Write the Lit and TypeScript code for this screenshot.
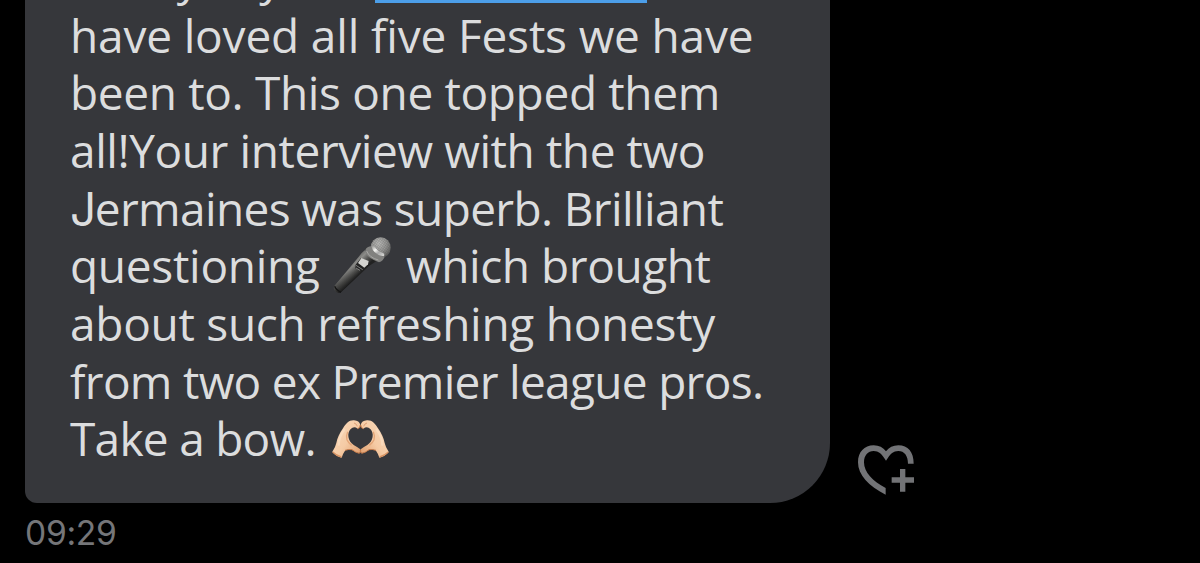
import { LitElement, html, css, svg } from 'lit';
import { customElement, property } from 'lit/decorators.js';

@customElement('mic-emoji')
export class MicEmoji extends LitElement {
  static styles = css`
    :host {
      display: inline-block;
      width: 59px;
      height: 58px;
      white-space: normal;
      line-height: 0;
    }

    svg {
      display: block;
      width: 100%;
      height: 100%;
    }
  `;

  render() {
    return html`
      <svg viewBox="40 36 177 174">
        <defs>
          <linearGradient id="body" gradientUnits="userSpaceOnUse" x1="82" y1="126" x2="112" y2="156">
            <stop offset="0" stop-color="#6a6a68" />
            <stop offset="0.3" stop-color="#8c8c89" />
            <stop offset="0.65" stop-color="#555553" />
            <stop offset="1" stop-color="#222" />
          </linearGradient>
          <linearGradient id="fade" gradientUnits="userSpaceOnUse" x1="130" y1="100" x2="50" y2="200">
            <stop offset="0.2" stop-color="#111" stop-opacity="0" />
            <stop offset="1" stop-color="#111" stop-opacity="0.45" />
          </linearGradient>
          <radialGradient id="ball" cx="0.4" cy="0.3" r="0.75">
            <stop offset="0" stop-color="#c4c4c2" />
            <stop offset="0.55" stop-color="#979795" />
            <stop offset="1" stop-color="#555554" />
          </radialGradient>
          <pattern id="mesh" width="6" height="6" patternUnits="userSpaceOnUse" patternTransform="rotate(35)">
            <path d="M0 0H6M0 0V6" stroke="#333" stroke-width="1.8" opacity="0.55" />
          </pattern>
          <linearGradient id="band" x1="0" y1="0" x2="1" y2="1">
            <stop offset="0" stop-color="#8a8a88" />
            <stop offset="0.35" stop-color="#f4f4f1" />
            <stop offset="0.6" stop-color="#aaa" />
            <stop offset="1" stop-color="#dededb" />
          </linearGradient>
        </defs>
        <path d="M138 76 Q128 84 122 93 L48 182 Q43 189 48 196 Q56 208 67 202 L151 123 Q164 116 176 106Z" fill="url(#body)" />
        <path d="M138 76 Q128 84 122 93 L48 182 Q43 189 48 196 Q56 208 67 202 L151 123 Q164 116 176 106Z" fill="url(#fade)" />
        <path d="M48 184 Q52 195 67 202" fill="none" stroke="#151515" stroke-width="4" />
        <path d="M126 100 L150 109 L148 121 L130 139 L110 130 L111 119Z" fill="#222" />
        <path d="M128 99 L150 108 L148 118 L137 128 L118 114Z" fill="#d4d4d1" />
        <path d="M112 121 L132 134 M112 129 L124 136" stroke="#aaa" stroke-width="2" />
        <ellipse cx="186" cy="68" rx="30" ry="31" fill="url(#ball)" />
        <ellipse cx="186" cy="68" rx="30" ry="31" fill="url(#mesh)" />
        <path d="M140 75 Q138 96 181 112 Q194 107 198 95 Q172 92 158 64 Q145 64 140 75Z" fill="#81817f" />
        <path d="M158 63 Q165 61 170 69 Q178 80 193 84 Q200 88 195 94 Q164 89 158 63Z" fill="url(#band)" />
        <path d="M144 78 Q152 98 179 105" fill="none" stroke="#a8a8a5" stroke-width="3" />
      </svg>
    `;
  }
}

@customElement('heart-hands-emoji')
export class HeartHandsEmoji extends LitElement {
  static styles = css`
    :host {
      display: inline-block;
      width: 57px;
      height: 40px;
      white-space: normal;
      line-height: 0;
    }

    svg {
      display: block;
      width: 100%;
      height: 100%;
    }
  `;

  // one hand, drawn twice with the second one mirrored
  private hand() {
    return svg`
      <path
        d="M122 60 Q119 47 103 46 C88 45 79 55 70 70 C59 86 53 99 50 114 Q47 128 38 140 Q48 153 66 158 Q70 146 77 136 Q87 132 96 134 Q108 143 119 145 Q125 140 122 133 Q113 126 102 120 C84 108 81 84 93 72 Q103 62 114 71 Q122 70 122 60Z"
        fill="url(#skin)"
      />
      <path d="M76 136 Q87 132 97 134 Q108 143 119 145 Q124 142 122 135" fill="none" stroke="#c77c4b" stroke-width="3" />
      <path d="M39 141 Q50 152 65 156" fill="none" stroke="#d79262" stroke-width="4" />
      <path d="M84 80 Q79 91 82 104 Q86 114 96 121" fill="none" stroke="#e3a577" stroke-width="4" />
      <path d="M103 54 Q110 55 113 64" fill="none" stroke="#d6986d" stroke-width="2.5" />
      <path d="M74 74 Q57 98 57 119" fill="none" stroke="#ffecd6" stroke-width="7" stroke-linecap="round" opacity="0.4" />
      <path d="M122 60 Q122 70 114 71" fill="none" stroke="#b96d3e" stroke-width="3" />
    `;
  }

  render() {
    return html`
      <svg viewBox="37 42 171 120">
        <defs>
          <linearGradient id="skin" x1="0" y1="0" x2="1" y2="1">
            <stop offset="0" stop-color="#f9dbbd" />
            <stop offset="0.55" stop-color="#f5cba5" />
            <stop offset="1" stop-color="#dd9867" />
          </linearGradient>
        </defs>
        ${this.hand()}
        <g transform="translate(245 0) scale(-1 1)">${this.hand()}</g>
      </svg>
    `;
  }
}

@customElement('reaction-button')
export class ReactionButton extends LitElement {
  static styles = css`
    :host {
      display: block;
      width: 56px;
      height: 50px;
      color: #727376;
    }

    svg {
      display: block;
      width: 100%;
      height: 100%;
    }
  `;

  render() {
    return html`
      <svg viewBox="54 46 168 150">
        <path
          d="M221 102 H204 C204 78 193 64 175 64 C160 64 151 74 144 84 L138 93 L132 84 C125 74 116 64 101 64 C84 64 72 77 72 98 C72 128 98 155 137 175 V195 C86 170 54 136 54 98 C54 67 73 47 101 47 C117 47 129 53 138 65 C147 53 159 47 175 47 C204 47 221 67 221 102Z"
          fill="currentColor"
        />
        <path d="M180 118 H196 V143 H222 V159 H196 V186 H180 V159 H155 V143 H180Z" fill="currentColor" />
      </svg>
    `;
  }
}

@customElement('message-run')
export class MessageRun extends LitElement {
  @property() text = '';
  @property({ type: Number }) tracking = 0;

  render() {
    return html`<span style="letter-spacing: ${this.tracking}px">${this.text}</span>`;
  }
}

@customElement('app-root')
export class AppRoot extends LitElement {
  static styles = css`
    :host {
      display: flex;
      flex-direction: column;
      justify-content: flex-end;
      box-sizing: border-box;
      height: 563px;
      padding-left: 25px;
      overflow: hidden;
      background: #000;
      font-family: 'Open Sans', sans-serif;
    }

    .message {
      display: flex;
      flex: none;
      align-items: flex-end;
      gap: 28px;
    }

    .bubble {
      box-sizing: border-box;
      width: 805px;
      padding: 36px 45px 35px;
      border-radius: 60px 60px 60px 12px;
      background: #36373b;
      color: #dcddde;
      font-size: 46px;
      line-height: 57.7px;
    }

    .line {
      height: 57.7px;
      white-space: pre;
    }

    .link {
      display: inline-block;
      height: 54.5px;
      box-sizing: border-box;
      width: 272px;
      margin-left: 33px;
      overflow: hidden;
      vertical-align: top;
      border-bottom: 4px solid #4c9ee9;
      color: #4c9ee9;
    }

    .opening {
      display: inline-block;
      width: 272px;
    }

    .grotesk {
      font-family: Inter, sans-serif;
      letter-spacing: -1.5px;
    }

    mic-emoji {
      margin: 0 3px 0 1px;
      vertical-align: -12px;
    }

    heart-hands-emoji {
      margin-left: 5px;
      vertical-align: -3px;
    }

    reaction-button {
      margin-bottom: 8px;
    }

    .time {
      flex: none;
      height: 60px;
      box-sizing: border-box;
      padding-top: 10px;
      color: #757679;
      font-family: Inter, sans-serif;
      font-size: 33.6px;
      line-height: 40px;
      letter-spacing: -0.3px;
    }
  `;

  render() {
    return html`
      <div class="message">
        <div class="bubble">
          <div class="line"><span class="opening">Henry say</span><span class="link">@KickOff</span></div>
          <div class="line"><message-run text="have loved all five Fests we have" tracking="-0.17"></message-run></div>
          <div class="line"><message-run text="been to. This one topped them" tracking="-0.35"></message-run></div>
          <div class="line"><message-run text="all!Your interview with the two" tracking="-0.42"></message-run></div>
          <div class="line"><span class="grotesk">J</span><message-run text="ermaines was superb. Brilliant" tracking="-0.64"></message-run></div>
          <div class="line"><message-run text="questioning " tracking="-0.28"></message-run><mic-emoji></mic-emoji><message-run text=" which brought" tracking="-0.42"></message-run></div>
          <div class="line"><message-run text="about such refreshing honesty" tracking="-0.28"></message-run></div>
          <div class="line"><message-run text="from two ex Premier league pros." tracking="-0.7"></message-run></div>
          <div class="line"><message-run text="Take a bow. " tracking="-0.74"></message-run><heart-hands-emoji></heart-hands-emoji></div>
        </div>
        <reaction-button></reaction-button>
      </div>
      <div class="time">09:29</div>
    `;
  }
}
